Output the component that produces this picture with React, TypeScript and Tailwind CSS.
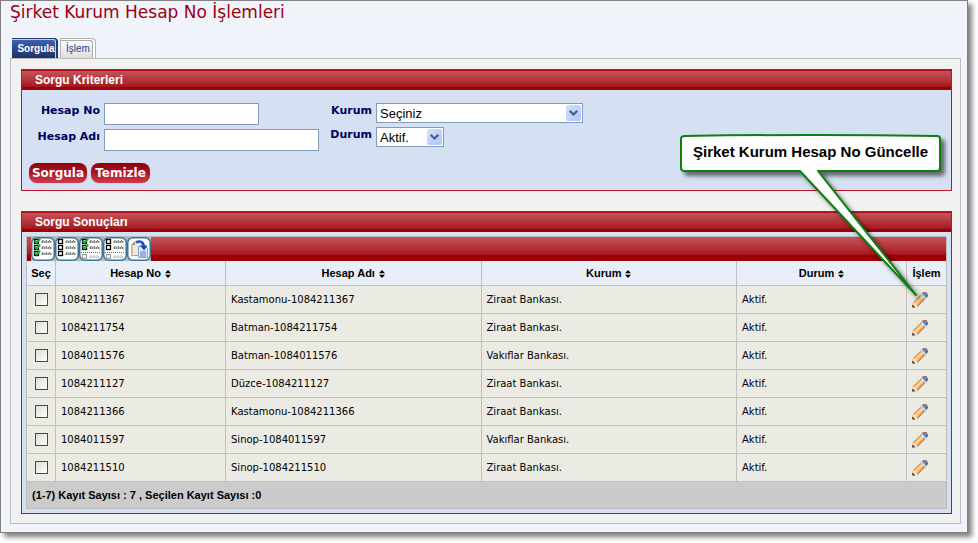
import React, { useState } from "react";

const verdana = "font-['DejaVu_Sans',Verdana,sans-serif]";
const arial = "font-['Liberation_Sans',Arial,sans-serif]";

type Account = { no: string; name: string; bank: string; status: string };

const accounts: Account[] = [
  { no: "1084211367", name: "Kastamonu-1084211367", bank: "Ziraat Bankası.", status: "Aktif." },
  { no: "1084211754", name: "Batman-1084211754", bank: "Ziraat Bankası.", status: "Aktif." },
  { no: "1084011576", name: "Batman-1084011576", bank: "Vakıflar Bankası.", status: "Aktif." },
  { no: "1084211127", name: "Düzce-1084211127", bank: "Ziraat Bankası.", status: "Aktif." },
  { no: "1084211366", name: "Kastamonu-1084211366", bank: "Ziraat Bankası.", status: "Aktif." },
  { no: "1084011597", name: "Sinop-1084011597", bank: "Vakıflar Bankası.", status: "Aktif." },
  { no: "1084211510", name: "Sinop-1084211510", bank: "Ziraat Bankası.", status: "Aktif." },
];

function PencilIcon() {
  return (
    <svg width="16" height="16" viewBox="0 0 16 16" aria-hidden="true">
      <path d="M.6 10.600 9.600 1.600 14.200 6.200 5.200 15.200.4 15.400Z" fill="#f2b06a" />
      <path d="M1.400 10.600 10 2" stroke="#d9975a" strokeWidth="1" />
      <path d="M3 12.200 11.600 3.600" stroke="#fbdcbc" strokeWidth="1.600" />
      <path d="M5 14.600 13.800 5.800" stroke="#b8651c" strokeWidth="1" />
      <path d="M.6 10.800 2.600 11 4.800 13.200 5 15.200.4 15.400Z" fill="#fae3bb" />
      <path d="M.5 12.600 3.200 15.300.3 15.600Z" fill="#1e1a3c" />
      <path d="M9.200 2 11 .6Q14-.2 15.400 1.800 16 4.400 13.800 6.600Z" fill="#4a9ccb" />
      <path d="M9.200 2 13.800 6.600" stroke="#cfe8ee" strokeWidth="1.200" />
      <path d="M10.800.9Q13.200-.2 15 1.600" stroke="#cf5f4c" strokeWidth="1.400" fill="none" />
      <path d="M14.900 2.400Q15.300 3.800 14.400 5" stroke="#1b5a9c" strokeWidth="1.400" fill="none" />
    </svg>
  );
}

function SortIcon() {
  return (
    <svg width="6" height="8" viewBox="0 0 6 8" className="mt-px" aria-hidden="true">
      <path d="M3 0 6 3.3H0ZM3 8 6 4.7H0Z" fill="#000" />
    </svg>
  );
}

function ListIcon({ checked, partial }: { checked: boolean; partial: boolean }) {
  return (
    <svg width="24" height="24" viewBox="0 0 24 24" aria-hidden="true">
      <path d="M0 0H24V24H0Z" fill="#a9bccb" />
      <rect x=".75" y=".75" width="22.5" height="22.5" rx="5" fill="#fff" stroke="#3f7392" strokeWidth="1.5" />
      {[2, 8, 14].map((y, i) => {
        const faded = partial && i === 2;
        const top = faded ? 17 : y;
        const ink = faded ? "#a0a0a0" : "#000";
        const line = faded ? "#b8b8b8" : "#555";
        return (
          <g key={y}>
            <rect x="3.5" y={top + 0.5} width="4" height="4" fill="#fff" stroke={ink} strokeWidth="1.3" />
            <path d={`M10.500 ${top + 3}H20.500`} stroke={line} strokeWidth="1.600" strokeDasharray="2 .5 1 .5" />
            <path d={`M11.500 ${top + 1.5}H20`} stroke={line} strokeWidth="1" strokeDasharray="1 2.200" />
            {checked && !faded && (
              <path d={`M3.600 ${top + 1.4}l2 2.200 3.600-3.800`} fill="none" stroke="#00b81c" strokeWidth="2" />
            )}
          </g>
        );
      })}
      {partial && <path d="M2 15.500h20" stroke="#3c72a5" strokeWidth="1" strokeDasharray="1 1" />}
    </svg>
  );
}

function ExportIcon() {
  return (
    <svg width="24" height="24" viewBox="0 0 24 24" aria-hidden="true">
      <path d="M0 0H24V24H0Z" fill="#a9bccb" />
      <rect x=".75" y=".75" width="22.5" height="22.5" rx="5" fill="#fff" stroke="#3f7392" strokeWidth="1.5" />
      <path d="M8 4.500h7v14H4.500V8Z" fill="#ece8e2" stroke="#aaa59e" />
      <path d="M8 4.500V8H4.500Z" fill="#a3906c" />
      <path d="M5 9.500v8" stroke="#c9bda6" strokeWidth="1.500" />
      <path d="M11.500 9.500h7l2 2v9h-9Z" fill="#e6edfa" stroke="#8a9ac0" />
      <path d="M13 15h6M13 17h6M13 19h6" stroke="#5079cf" strokeWidth="1" />
      <path d="M9 5.200Q15.500 2.800 17 9" fill="none" stroke="#1d57c4" strokeWidth="2.600" />
      <path d="M13 8.500H20.500L17 13.500Z" fill="#0e4abc" />
    </svg>
  );
}

function Panel({ title, className, children }: { title: string; className: string; children: React.ReactNode }) {
  return (
    <section className={`border border-[#b91627] bg-[#d5e1f3] ${className}`}>
      <h2
        className={`${arial} h-5 border-t border-b-3 border-t-[#b3101c] border-b-[#9b0006] bg-linear-to-b from-[#c4535b] to-[#a5131c] px-[13px] text-xs leading-[18px] font-bold text-white`}
      >
        {title}
      </h2>
      {children}
    </section>
  );
}

function SelectBox({ id, width, options }: { id: string; width: string; options: string[] }) {
  return (
    <div className={`relative h-5 ${width}`}>
      <select
        id={id}
        className={`${arial} block h-5 w-full appearance-none border border-[#7f9db9] bg-white px-[3px] pt-px text-[13px] leading-4 text-black`}
      >
        {options.map((o) => (
          <option key={o}>{o}</option>
        ))}
      </select>
      <span className="pointer-events-none absolute top-0.5 right-0.5 flex h-4 w-[15px] items-center justify-center rounded-xs bg-linear-to-br from-[#d3e0fe] to-[#aec6f9]">
        <svg width="9" height="6" viewBox="0 0 9 6" aria-hidden="true">
          <path d="M.7.8 4.500 4.500 8.300.8" fill="none" stroke="#4d6185" strokeWidth="2.200" />
        </svg>
      </span>
    </div>
  );
}

function CheckBox({ label, checked, onChange }: { label: string; checked: boolean; onChange: () => void }) {
  return (
    <input
      type="checkbox"
      aria-label={label}
      checked={checked}
      onChange={onChange}
      className="mx-auto block size-[13px] appearance-none border border-[#1c5180] bg-linear-to-br from-[#dcdcd7] to-white checked:bg-[#21a121] checked:bg-none"
    />
  );
}

const fieldLabel = `${verdana} text-right text-[11px] leading-4 font-bold text-[#00005f]`;
const textField = `${arial} h-[22px] border border-[#7f9db9] bg-white px-1 text-[13px]`;
const pill = `${verdana} h-5 rounded-lg bg-linear-to-b from-[#8e000b] via-[#ac1424] to-[#d13c4c] text-center text-xs leading-5 font-bold text-white shadow-[0_0_1px_#c08088]`;
const toolButton = "block size-6";
const headCell = `${arial} h-[25px] border-r border-b border-[#c0c0c0] bg-[#e8eff8] p-0 text-[11px] font-bold last:border-r-0`;
const cell = `${verdana} h-7 border-r border-b border-[#c0c0c0] px-[5px] py-0 text-[10px] leading-4 last:border-r-0`;

function Callout() {
  return (
    <div className="pointer-events-none absolute top-[131px] right-4 h-[170px] w-[274px]">
      <svg className="absolute inset-0 overflow-visible" width="274" height="170" viewBox="0 0 274 170" aria-hidden="true">
        <path
          d="M8 4Q135 2 260 4Q263 4 263 7V36Q263 39 260 39H141L239 163L123 39H8Q4 39 4 36V7Q4 4 8 4Z"
          fill="#fff"
          stroke="#0a820a"
          strokeWidth="2"
          strokeLinejoin="round"
          className="drop-shadow-[4px_4px_2px_rgba(0,0,0,0.55)]"
        />
      </svg>
      <p className={`${arial} relative mt-3 pl-4 text-[15px] leading-4 font-bold whitespace-nowrap text-black`}>
        Şirket Kurum Hesap No Güncelle
      </p>
    </div>
  );
}

export default function App() {
  const [selected, setSelected] = useState<string[]>([]);
  const toggle = (no: string) =>
    setSelected((s) => (s.includes(no) ? s.filter((n) => n !== no) : [...s, no]));
  const all = accounts.map((a) => a.no);

  return (
    <div className="bg-white pr-2.5 pb-2.5">
      <main className="relative border border-[#808080] bg-[#f0f4fa] pr-1.5 pb-2 pl-[9px] shadow-[4px_4px_5px_rgba(0,0,0,0.5)]">
        <h1 className={`${verdana} h-[37px] pt-px text-[17px] leading-5 text-[#990010]`}>
          Şirket Kurum Hesap No İşlemleri
        </h1>

        <nav className={`${arial} flex h-5 items-end gap-0.5 pl-0.5`}>
          <button
            type="button"
            className="h-5 w-[46px] rounded-tr-sm border-t border-r-2 border-[#203a72] bg-linear-to-b from-[#3f63b4] to-[#1f3263] pl-1 text-[10px] leading-5 font-bold text-white shadow-[inset_-1px_1px_0_#c5cee0]"
          >
            Sorgula
          </button>
          <button
            type="button"
            className="h-5 w-9 rounded-tr-sm border-t border-r border-l border-[#b4b4b4] bg-linear-to-b from-white to-[#dedede] text-[10px] leading-4 text-[#104a90] shadow-[inset_-2px_1px_0_#fff,inset_-3px_2px_0_#aaa]"
          >
            İşlem
          </button>
        </nav>

        <div className="border border-[#bcbcbc] bg-[#f1f1f1] px-2.5 pt-2.5 pb-[9px] pr-2">
          <Panel title="Sorgu Kriterleri" className="mb-5">
            <form className="px-[7px] pt-[13px] pb-[7px]" onSubmit={(e) => e.preventDefault()}>
              <div className="flex gap-2.5">
                <div className="grid grid-cols-[71px_auto] gap-x-1 gap-y-1">
                  <label htmlFor="hesap-no" className={fieldLabel}>Hesap No</label>
                  <input id="hesap-no" type="text" className={`${textField} w-[155px]`} />
                  <label htmlFor="hesap-adi" className={fieldLabel}>Hesap Adı</label>
                  <input id="hesap-adi" type="text" className={`${textField} w-[215px]`} />
                </div>
                <div className="grid grid-cols-[43px_auto] content-start gap-x-1 gap-y-1">
                  <label htmlFor="kurum" className={fieldLabel}>Kurum</label>
                  <SelectBox id="kurum" width="w-[207px]" options={["Seçiniz", "Ziraat Bankası.", "Vakıflar Bankası."]} />
                  <label htmlFor="durum" className={fieldLabel}>Durum</label>
                  <SelectBox id="durum" width="w-[68px]" options={["Aktif.", "Pasif."]} />
                </div>
              </div>
              <div className="mt-3 flex gap-1">
                <button type="submit" className={`${pill} w-[58px]`}>Sorgula</button>
                <button type="reset" className={`${pill} w-[59px]`}>Temizle</button>
              </div>
            </form>
          </Panel>

          <Panel title="Sorgu Sonuçları" className="">
            <div className="px-1 py-1">
              <div className="border border-[#bcbcbc]">
                <div className="flex h-6 border-b-6 border-[#9b0006] bg-linear-to-b from-[#c4535b] to-[#a5131c] pl-1">
                  <button type="button" aria-label="Tümünü seç" className={toolButton} onClick={() => setSelected(all)}>
                    <ListIcon checked partial={false} />
                  </button>
                  <button type="button" aria-label="Seçimi kaldır" className={toolButton} onClick={() => setSelected([])}>
                    <ListIcon checked={false} partial={false} />
                  </button>
                  <button type="button" aria-label="Sayfadakileri seç" className={toolButton} onClick={() => setSelected(all)}>
                    <ListIcon checked partial />
                  </button>
                  <button type="button" aria-label="Sayfadaki seçimi kaldır" className={toolButton} onClick={() => setSelected([])}>
                    <ListIcon checked={false} partial />
                  </button>
                  <button type="button" aria-label="Dışa aktar" className={toolButton}>
                    <ExportIcon />
                  </button>
                </div>
                <table className="w-full table-fixed border-separate border-spacing-0 bg-[#ebebe4] text-black">
                  <colgroup>
                    <col className="w-[29px]" />
                    <col className="w-[170px]" />
                    <col />
                    <col />
                    <col className="w-[170px]" />
                    <col className="w-[39px]" />
                  </colgroup>
                  <thead>
                    <tr>
                      <th className={headCell}>Seç</th>
                      {["Hesap No", "Hesap Adı", "Kurum", "Durum"].map((title) => (
                        <th key={title} className={headCell}>
                          <button type="button" className="mx-auto flex items-center gap-1 leading-4">
                            {title}
                            <SortIcon />
                          </button>
                        </th>
                      ))}
                      <th className={headCell}>İşlem</th>
                    </tr>
                  </thead>
                  <tbody>
                    {accounts.map((a) => (
                      <tr key={a.no}>
                        <td className={cell}>
                          <CheckBox label={a.no} checked={selected.includes(a.no)} onChange={() => toggle(a.no)} />
                        </td>
                        <td className={cell}>{a.no}</td>
                        <td className={cell}>{a.name}</td>
                        <td className={cell}>{a.bank}</td>
                        <td className={cell}>{a.status}</td>
                        <td className={cell}>
                          <button type="button" aria-label={`${a.no} güncelle`} className="block">
                            <PencilIcon />
                          </button>
                        </td>
                      </tr>
                    ))}
                  </tbody>
                  <tfoot>
                    <tr>
                      <td colSpan={6} className={`${arial} h-[26px] bg-[#cbcbcb] px-[5px] py-0 text-[11px] font-bold`}>
                        {`(1-7) Kayıt Sayısı : 7 , Seçilen Kayıt Sayısı :${selected.length}`}
                      </td>
                    </tr>
                  </tfoot>
                </table>
              </div>
            </div>
          </Panel>
        </div>

        <Callout />
      </main>
    </div>
  );
}
